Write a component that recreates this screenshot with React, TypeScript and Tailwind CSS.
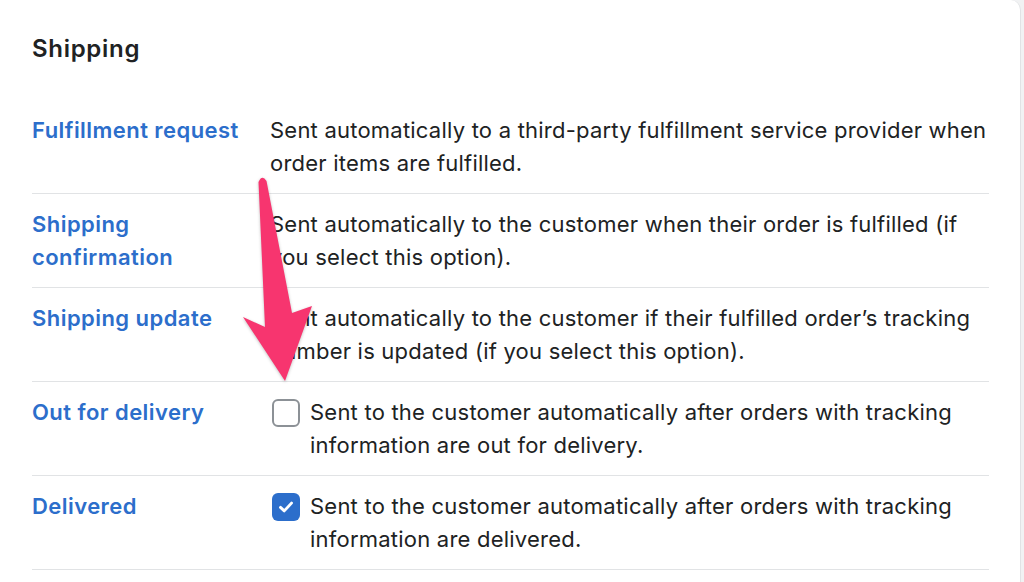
import React from "react";

type Row = {
  label: string[];
  lines: string[];
  checkbox?: "on" | "off";
};

const rows: Row[] = [
  {
    label: ["Fulfillment request"],
    lines: [
      "Sent automatically to a third-party fulfillment service provider when",
      "order items are fulfilled.",
    ],
  },
  {
    label: ["Shipping", "confirmation"],
    lines: [
      "Sent automatically to the customer when their order is fulfilled (if",
      "you select this option).",
    ],
  },
  {
    label: ["Shipping update"],
    lines: [
      "Sent automatically to the customer if their fulfilled order\u2019s tracking",
      "number is updated (if you select this option).",
    ],
  },
  {
    label: ["Out for delivery"],
    checkbox: "off",
    lines: [
      "Sent to the customer automatically after orders with tracking",
      "information are out for delivery.",
    ],
  },
  {
    label: ["Delivered"],
    checkbox: "on",
    lines: [
      "Sent to the customer automatically after orders with tracking",
      "information are delivered.",
    ],
  },
];

function Checkbox({ on }: { on: boolean }) {
  if (on) {
    return (
      <div className="w-[28px] h-[28px] rounded-[6px] bg-[#2c6ecb] flex items-center justify-center shrink-0 mt-[3px] ml-[2px]">
        <svg width="20" height="20" viewBox="0 0 16 16" fill="none">
          <path d="M3.6 8.3 L6.6 11.1 L12.4 4.9" stroke="white" strokeWidth="2.3" strokeLinecap="round" strokeLinejoin="round" />
        </svg>
      </div>
    );
  }
  return (
    <div className="w-[28px] h-[28px] rounded-[6px] border-2 border-[#8c9196] bg-white shrink-0 mt-[3px] ml-[2px]" />
  );
}

export default function App() {
  return (
    <div
      className="w-[1024px] h-[582px] bg-[#f1f2f3] overflow-hidden"
      style={{ fontFamily: "Inter, 'Noto Sans', sans-serif" }}
    >
      <div className="relative w-[1021px] h-[582px] bg-white border-r border-[#e1e3e5] rounded-tr-[10px] px-8 pt-[33px]">
        <h2 className="text-[24px] leading-[32px] font-semibold text-[#202223] tracking-[0.7px]">Shipping</h2>
        <div className="mt-[35px] w-[957px]">
          {rows.map((r, i) => (
            <div key={i} className="flex border-b border-[#e1e3e5] pt-[14px] pb-[13px]">
              <div className="w-[238px] shrink-0 text-[22px] leading-[33px] font-semibold text-[#2c6ecb] tracking-[0.45px]">
                {r.label.map((l, j) => (
                  <div key={j}>{l}</div>
                ))}
              </div>
              <div className="flex-1 flex gap-[10px]">
                {r.checkbox && <Checkbox on={r.checkbox === "on"} />}
                <div className="text-[22px] leading-[33px] text-[#202223] whitespace-nowrap tracking-[0.22px]">
                  {r.lines.map((l, j) => (
                    <div key={j}>{l}</div>
                  ))}
                </div>
              </div>
            </div>
          ))}
        </div>
        <svg
          className="absolute left-0 top-0 pointer-events-none"
          width="1021"
          height="582"
          viewBox="0 0 1021 582"
          style={{ filter: "drop-shadow(0 1px 1.5px rgba(0,0,0,0.25))" }}
        >
          <path
            d="M258.5 182 Q262 174 266.5 181 L292 313 L312 306 L285 381 L243 317 L265 327 Z"
            fill="#f7356f"
            strokeLinejoin="round"
          />
        </svg>
      </div>
    </div>
  );
}
